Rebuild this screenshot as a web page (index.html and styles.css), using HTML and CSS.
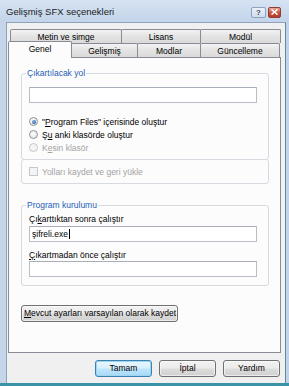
FILE: index.html
```html
<!DOCTYPE html>
<html lang="tr">
<head>
<meta charset="utf-8">
<title>Gelişmiş SFX seçenekleri</title>
<link rel="stylesheet" href="styles.css">
</head>
<body>
<div class="window">
  <div class="titlebar">
    <span class="title">Gelişmiş SFX seçenekleri</span>
    <div class="tb-buttons">
      <span class="tb-btn help">?</span>
      <span class="tb-btn close"><svg width="7" height="6" viewBox="0 0 7 6"><path d="M0.5 0.5 L6.5 5.5 M6.5 0.5 L0.5 5.5" stroke="#fff" stroke-width="1.6" fill="none"/></svg></span>
    </div>
  </div>
  <div class="client">
    <div class="tabs">
      <div class="tabrow back">
        <div class="tab t-metin">Metin ve simge</div>
        <div class="tab t-lisans">Lisans</div>
        <div class="tab t-modul">Modül</div>
      </div>
      <div class="tabrow front">
        <div class="tab sel t-genel">Genel</div>
        <div class="tab t-gelismis">Gelişmiş</div>
        <div class="tab t-modlar">Modlar</div>
        <div class="tab t-guncel">Güncelleme</div>
      </div>
    </div>
    <div class="panel">
      <fieldset class="group g1">
        <legend>Çıkartılacak yol</legend>
        <div class="textbox"></div>
        <div class="opts">
          <div class="opt"><span class="radio on"></span><span>"<u>P</u>rogram Files" içerisinde oluştur</span></div>
          <div class="opt"><span class="radio"></span><span>Ş<u>u</u> anki klasörde oluştur</span></div>
          <div class="opt disabled"><span class="radio"></span><span>K<u>e</u>sin klasör</span></div>
        </div>
      </fieldset>
      <div class="subbox">
        <div class="opt disabled"><span class="check"></span><span>Yolları kaydet ve geri yükle</span></div>
      </div>
      <fieldset class="group g2">
        <legend>Program kurulumu</legend>
        <div class="field-label">Çı<u>k</u>arttıktan sonra çalıştır</div>
        <div class="textbox filled">şifreli.exe<span class="caret"></span></div>
        <div class="field-label second"><u>Ç</u>ıkartmadan önce çalıştır</div>
        <div class="textbox"></div>
      </fieldset>
      <button class="btn wide"><u>M</u>evcut ayarları varsayılan olarak kaydet</button>
    </div>
    <div class="actions">
      <button class="btn default">Tamam</button>
      <button class="btn">İptal</button>
      <button class="btn">Yardım</button>
    </div>
  </div>
</div>
</body>
</html>
```
FILE: styles.css
```css
* { box-sizing: border-box; }
html, body { margin: 0; padding: 0; }
body {
  width: 289px;
  height: 386px;
  overflow: hidden;
  font-family: "Liberation Sans", Arial, sans-serif;
  font-size: 8.5px;
  color: #000;
}
.window {
  width: 289px;
  height: 386px;
  display: flex;
  flex-direction: column;
  background: linear-gradient(90deg, #c4d5ea 0%, #c9d9ec 60%, #c2d3e8 100%);
  border-bottom: 3px solid #3b93a8;
}
.titlebar {
  height: 22px;
  flex: none;
  display: flex;
  align-items: center;
  justify-content: space-between;
  padding: 0 8px 0 6px;
  background: linear-gradient(#d6e3f2, #c3d4ea);
}
.title {
  font-size: 9.5px;
  color: #1a1a1a;
  padding-top: 1px;
}
.tb-buttons {
  display: flex;
  gap: 2px;
  align-items: center;
  margin-top: 2px;
}
.tb-btn {
  height: 11px;
  display: flex;
  align-items: center;
  justify-content: center;
  border-radius: 2px;
}
.help {
  width: 15px;
  border: 1px solid #8da2bd;
  background: linear-gradient(#edf2f9, #cfdcec);
  color: #3b4a60;
  font-weight: bold;
  font-size: 8px;
}
.close {
  width: 13px;
  border: 1px solid #8b3e32;
  background: linear-gradient(#e9a896, #c8503c 55%, #b93c2a);
}
.client {
  flex: 1;
  margin: 0 3px 0 6px;
  border: 1px solid #8fa3bc;
  border-bottom: none;
  border-right-color: #5a8e9c;
  background: #f0f0f0;
  padding: 6px 4px 0 1px;
  display: flex;
  flex-direction: column;
}
.tabs {
  display: flex;
  flex-direction: column;
}
.tabrow {
  display: flex;
  height: 14px;
  align-items: flex-start;
}
.tabrow.back { margin-left: 2px; }
.tab {
  height: 14px;
  border: 1px solid #898c95;
  border-bottom: none;
  border-radius: 2px 2px 0 0;
  background: linear-gradient(#f3f3f3, #e3e3e3 50%, #dadada);
  display: flex;
  align-items: center;
  justify-content: center;
  margin-left: -1px;
  line-height: 1;
  padding-top: 1px;
}
.tab:first-child { margin-left: 0; }
.t-metin { width: 112px; }
.t-lisans { width: 80px; }
.t-modul { width: 81px; }
.t-genel { width: 64px; }
.t-gelismis { width: 67px; }
.t-modlar { width: 64px; }
.t-guncel { width: 80px; }
.tab.sel {
  height: 17px;
  margin-top: -2px;
  background: #fcfcfc;
  position: relative;
  z-index: 1;
  padding-top: 0;
  padding-bottom: 1px;
}
.panel {
  height: 296px;
  flex: none;
  border: 1px solid #898c95;
  background: #fcfcfc;
  padding: 10px 11px 0 12px;
  display: flex;
  flex-direction: column;
  align-items: stretch;
}
.group {
  margin: 0;
  min-width: 0;
  border: 1px solid #d5dbe1;
  border-radius: 3px;
  padding: 9px 11px 5px 7px;
}
.group legend {
  padding: 0 1px;
  margin-left: -3px;
  line-height: 10px;
  color: #1f5cb8;
}
.textbox {
  height: 16px;
  border: 1px solid #b9bec6;
  border-top-color: #a9afb8;
  background: #fff;
  display: flex;
  align-items: center;
  padding-left: 2px;
}
.caret {
  width: 1px;
  height: 10px;
  background: #000;
  margin-left: 1px;
}
.opts {
  margin-top: 12px;
  display: flex;
  flex-direction: column;
}
.opt {
  height: 13px;
  display: flex;
  align-items: center;
  gap: 4px;
}
.opt.disabled { color: #a3a3a3; }
.radio {
  width: 9px;
  height: 9px;
  border-radius: 50%;
  border: 1px solid #8c9096;
  background: radial-gradient(circle at 40% 35%, #ffffff, #dcdfe3);
  flex: none;
  display: flex;
  align-items: center;
  justify-content: center;
}
.radio.on::after {
  content: "";
  width: 4px;
  height: 4px;
  border-radius: 50%;
  background: radial-gradient(circle at 40% 35%, #7fb3e8, #1f4f8f);
}
.opt.disabled .radio { border-color: #c4c7cb; background: #f4f4f4; }
.check {
  width: 9px;
  height: 9px;
  border: 1px solid #c4c7cb;
  background: #f4f4f4;
  flex: none;
}
.subbox {
  margin-top: -1px;
  height: 25px;
  border: 1px solid #d5dbe1;
  border-radius: 3px;
  padding: 5px 7px 0 7px;
}
.g2 {
  margin-top: 16px;
  padding: 3px 11px 8px 7px;
}
.field-label {
  height: 12px;
  line-height: 12px;
  margin-bottom: 1px;
}
.field-label.second { margin-top: 7px; margin-bottom: 0; }
.btn {
  font: inherit;
  color: #000;
  height: 17px;
  padding: 0 4px;
  border: 1px solid #707070;
  border-radius: 3px;
  background: linear-gradient(#f2f2f2 0%, #ebebeb 48%, #dddddd 52%, #cfcfcf 100%);
  box-shadow: inset 0 0 0 1px rgba(255,255,255,0.6);
  line-height: 1;
}
.btn.wide {
  margin-top: 19px;
  width: 157px;
  align-self: flex-start;
  white-space: nowrap;
  padding: 0 2px;
}
.actions {
  display: flex;
  justify-content: flex-end;
  gap: 7px;
  margin-top: 7px;
  padding-right: 1px;
}
.actions .btn { width: 57px; }
.btn.default {
  border-color: #3c7fb1;
  background: linear-gradient(#eaf6fd 0%, #d9f0fc 48%, #bee6fd 52%, #a7d9f5 100%);
  box-shadow: inset 0 0 0 1px #9ed6f0;
}
```
